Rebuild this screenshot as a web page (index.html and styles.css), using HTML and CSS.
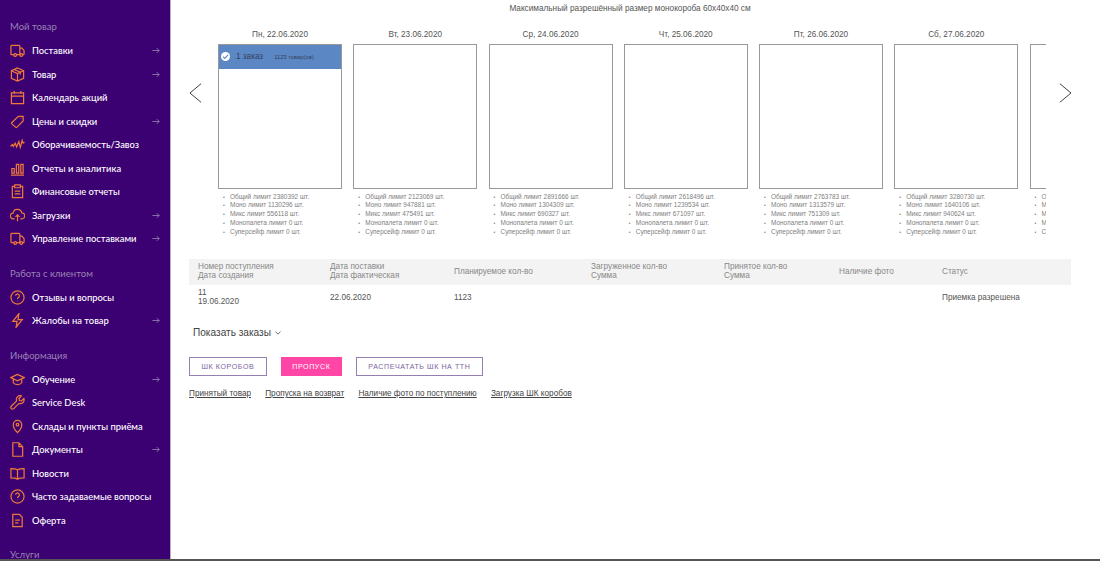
FILE: index.html
```html
<!DOCTYPE html>
<html lang="ru">
<head>
  <meta charset="UTF-8" />
  <title>Поставки</title>
  <link rel="stylesheet" href="styles.css">
</head>
<body>
  <svg class="sprite" width="0" height="0">
    <defs>
      <symbol id="i-truck" viewBox="0 0 16 16"><path d="M4 12.500H2a1 1 0 0 1-1-1v-8a1 1 0 0 1 1-1h7.500a1 1 0 0 1 1 1v9H7M10.500 5.500h2.300l2.200 2.700v3.300a1 1 0 0 1-1 1h-1M10.500 12.500h.5"/><circle cx="5.500" cy="12.800" r="1.500"/><circle cx="12" cy="12.800" r="1.500"/></symbol>
      <symbol id="i-box" viewBox="0 0 16 16"><path d="M8 1l6.500 3v8L8 15l-6.500-3V4zM1.500 4L8 7l6.500-3M8 7v8M4.500 2.600l6.500 3v2.500"/></symbol>
      <symbol id="i-cal" viewBox="0 0 16 16"><path d="M1.500 3h13v11.500h-13zM1.500 6.500h13M4.500 1v3M11.500 1v3"/></symbol>
      <symbol id="i-tag" viewBox="0 0 16 16"><path d="M9 2.500h5v5l-6.800 6.800a.7.7 0 0 1-1 0L1.700 10.300a.7.7 0 0 1 0-1zM11.500 4.300l.3.300"/></symbol>
      <symbol id="i-pulse" viewBox="0 0 16 16"><path d="M.5 10l2-2 1 2 2-3.500 1.500 4L9.500 5l1.500 6 2-7.500 1 3 1.500-1"/></symbol>
      <symbol id="i-bars" viewBox="0 0 16 16"><path d="M2 8h2.500v5H2zM6.800 3.500h2.500V13H6.800zM11.500 3.500h2.500V13h-2.500zM1 15h14"/></symbol>
      <symbol id="i-clip" viewBox="0 0 16 16"><path d="M5 2.500H2.500v12h11v-12H11M5 1h6v3H5zM5 7.500h6M5 10.500h6"/></symbol>
      <symbol id="i-cloud" viewBox="0 0 16 16"><path d="M5 11.500H3.500a3 3 0 0 1-.3-6 4.800 4.800 0 0 1 9.400-.2 3 3 0 0 1 0 6.200H11M8 14V7.500M5.800 9.500L8 7.300l2.200 2.200"/></symbol>
      <symbol id="i-help" viewBox="0 0 16 16"><circle cx="8" cy="8" r="7"/><path d="M6 6.200a2 2 0 1 1 3 1.800c-.7.400-1 .8-1 1.500M8 11.500v.5"/></symbol>
      <symbol id="i-bolt" viewBox="0 0 16 16"><path d="M9.500.8L3 9h4.500l-1 6.200L13 7H8.500z"/></symbol>
      <symbol id="i-grad" viewBox="0 0 16 16"><path d="M8 2.500L.8 6 8 9.500 15.200 6zM3.500 7.500v4c1 1.500 2.800 2 4.500 2s3.500-.5 4.500-2v-4"/></symbol>
      <symbol id="i-wrench" viewBox="0 0 16 16"><path d="M14.800 3.800l-2.600 2.500-2.200-.4-.4-2.200L12.100 1a4 4 0 0 0-5 5.300L1.400 12a1.800 1.800 0 0 0 2.600 2.600l5.700-5.700a4 4 0 0 0 5.100-5.100z"/></symbol>
      <symbol id="i-pin" viewBox="0 0 16 16"><path d="M8 14.500S3.500 10 3.500 6a4.500 4.500 0 0 1 9 0C12.500 10 8 14.500 8 14.500z"/><circle cx="8" cy="6" r="1.400"/></symbol>
      <symbol id="i-doc" viewBox="0 0 16 16"><path d="M3 .8h6.500L13.500 5v10.200H3zM9.500 .8V5h4"/></symbol>
      <symbol id="i-book" viewBox="0 0 16 16"><path d="M8 4C6.500 3 4 2.700 1 2.700v10c3 0 5.500.3 7 1.300 1.500-1 4-1.300 7-1.300v-10C12 2.700 9.500 3 8 4zM8 4v10"/></symbol>
      <symbol id="i-offer" viewBox="0 0 16 16"><path d="M3 1.500h7L13 4.500v10H3zM5.500 7.500h5M5.500 10.500h3.500"/></symbol>
      <symbol id="i-arrow" viewBox="0 0 10 8"><path d="M.5 4h8.500M6 1l3 3-3 3"/></symbol>
    </defs>
  </svg>

  <div class="layout">
    <!-- Боковое меню -->
    <nav class="sidebar">
      <div class="nav-title">Мой товар</div>
      <a class="nav-item"><svg class="nav-icon"><use href="#i-truck"/></svg><span>Поставки</span><svg class="nav-arrow"><use href="#i-arrow"/></svg></a>
      <a class="nav-item"><svg class="nav-icon"><use href="#i-box"/></svg><span>Товар</span><svg class="nav-arrow"><use href="#i-arrow"/></svg></a>
      <a class="nav-item"><svg class="nav-icon"><use href="#i-cal"/></svg><span>Календарь акций</span></a>
      <a class="nav-item"><svg class="nav-icon"><use href="#i-tag"/></svg><span>Цены и скидки</span><svg class="nav-arrow"><use href="#i-arrow"/></svg></a>
      <a class="nav-item"><svg class="nav-icon"><use href="#i-pulse"/></svg><span>Оборачиваемость/Завоз</span></a>
      <a class="nav-item"><svg class="nav-icon"><use href="#i-bars"/></svg><span>Отчеты и аналитика</span></a>
      <a class="nav-item"><svg class="nav-icon"><use href="#i-clip"/></svg><span>Финансовые отчеты</span></a>
      <a class="nav-item"><svg class="nav-icon"><use href="#i-cloud"/></svg><span>Загрузки</span><svg class="nav-arrow"><use href="#i-arrow"/></svg></a>
      <a class="nav-item"><svg class="nav-icon"><use href="#i-truck"/></svg><span>Управление поставками</span><svg class="nav-arrow"><use href="#i-arrow"/></svg></a>

      <div class="nav-title">Работа с клиентом</div>
      <a class="nav-item"><svg class="nav-icon"><use href="#i-help"/></svg><span>Отзывы и вопросы</span></a>
      <a class="nav-item"><svg class="nav-icon"><use href="#i-bolt"/></svg><span>Жалобы на товар</span><svg class="nav-arrow"><use href="#i-arrow"/></svg></a>

      <div class="nav-title">Информация</div>
      <a class="nav-item"><svg class="nav-icon"><use href="#i-grad"/></svg><span>Обучение</span><svg class="nav-arrow"><use href="#i-arrow"/></svg></a>
      <a class="nav-item"><svg class="nav-icon"><use href="#i-wrench"/></svg><span>Service Desk</span></a>
      <a class="nav-item"><svg class="nav-icon"><use href="#i-pin"/></svg><span>Склады и пункты приёма</span></a>
      <a class="nav-item"><svg class="nav-icon"><use href="#i-doc"/></svg><span>Документы</span><svg class="nav-arrow"><use href="#i-arrow"/></svg></a>
      <a class="nav-item"><svg class="nav-icon"><use href="#i-book"/></svg><span>Новости</span></a>
      <a class="nav-item"><svg class="nav-icon"><use href="#i-help"/></svg><span>Часто задаваемые вопросы</span></a>
      <a class="nav-item"><svg class="nav-icon"><use href="#i-offer"/></svg><span>Оферта</span></a>

      <div class="nav-title">Услуги</div>
    </nav>

    <main class="content">
      <div class="max-size">Максимальный разрешённый размер монокороба 60х40х40 см</div>

      <div class="carousel">
        <svg class="chevron" viewBox="0 0 14 22"><path d="M13 1L1 11l12 10"/></svg>
        <div class="days" id="days"></div>
        <svg class="chevron" viewBox="0 0 14 22"><path d="M2 1l12 10L2 21"/></svg>
      </div>

      <div class="table-head">
        <div class="col col-1">Номер поступления<br>Дата создания</div>
        <div class="col col-2">Дата поставки<br>Дата фактическая</div>
        <div class="col col-3">Планируемое кол-во</div>
        <div class="col col-4">Загруженное кол-во<br>Сумма</div>
        <div class="col col-5">Принятое кол-во<br>Сумма</div>
        <div class="col col-6">Наличие фото</div>
        <div class="col col-7">Статус</div>
      </div>
      <div class="table-row">
        <div class="col col-1">11<br>19.06.2020</div>
        <div class="col col-2">22.06.2020</div>
        <div class="col col-3">1123</div>
        <div class="col col-4"></div>
        <div class="col col-5"></div>
        <div class="col col-6"></div>
        <div class="col col-7">Приемка разрешена</div>
      </div>

      <div class="show-orders">Показать заказы <svg class="caret" viewBox="0 0 8 5"><path d="M.5.500L4 4 7.500.500"/></svg></div>

      <div class="buttons">
        <button class="btn">ШК коробов</button>
        <button class="btn btn-pink">Пропуск</button>
        <button class="btn">Распечатать ШК на ТТН</button>
      </div>

      <div class="links">
        <a>Принятый товар</a>
        <a>Пропуска на возврат</a>
        <a>Наличие фото по поступлению</a>
        <a>Загрузка ШК коробов</a>
      </div>
    </main>
  </div>

  <script>
    const data = [
      { date: "Пн, 22.06.2020", total: 2380392, mono: 1130296, mix: 556118, order: true },
      { date: "Вт, 23.06.2020", total: 2123069, mono: 947881, mix: 475491 },
      { date: "Ср, 24.06.2020", total: 2891666, mono: 1304309, mix: 690327 },
      { date: "Чт, 25.06.2020", total: 2618496, mono: 1239534, mix: 671097 },
      { date: "Пт, 26.06.2020", total: 2763783, mono: 1313579, mix: 751309 },
      { date: "Сб, 27.06.2020", total: 3280730, mono: 1640106, mix: 940624 },
      { date: "Вс, 28.06.2020", total: 3280730, mono: 1640106, mix: 940624 }
    ];

    const days = document.getElementById("days");

    data.forEach((item) => {
      const day = document.createElement("div");
      day.className = "day";
      const order = item.order
        ? `<div class="order"><span class="check"><svg viewBox="0 0 8 8"><path d="M1.800 4.200l1.500 1.500 3-3.200"/></svg></span><span class="order-count">1 заказ</span><span class="order-goods">1123 товар(ов)</span></div>`
        : "";
      day.innerHTML = `
        <div class="day-date">${item.date}</div>
        <div class="day-box">${order}</div>
        <ul class="limits">
          <li>Общий лимит ${item.total} шт.</li>
          <li>Моно лимит ${item.mono} шт.</li>
          <li>Микс лимит ${item.mix} шт.</li>
          <li>Монопалета лимит 0 шт.</li>
          <li>Суперсейф лимит 0 шт.</li>
        </ul>
      `;
      days.appendChild(day);
    });
  </script>
</body>
</html>
```

FILE: styles.css
```css
html, body {
  margin: 0;
  height: 561px;
  overflow: hidden;
}

body {
  font-family: "Liberation Sans", Arial, sans-serif;
  background-color: #fff;
  color: #555;
}

.sprite {
  display: block;
  height: 0;
}

.layout {
  display: flex;
  height: 559px;
  border-bottom: 2px solid #555;
}

/* Боковое меню */
.sidebar {
  width: 170px;
  flex: none;
  height: 559px;
  overflow: hidden;
  background-color: #3b0072;
  border-right: 1px solid #b5b0bb;
  font-family: Lato, "Open Sans", sans-serif;
}

.nav-title {
  height: 14px;
  line-height: 14px;
  margin: 20px 0 5px 10px;
  font-size: 9.500px;
  color: #9a84b3;
}

.nav-item + .nav-title {
  margin-top: 16px;
}

.nav-item {
  display: flex;
  align-items: center;
  height: 23.500px;
  padding: 0 10px;
  color: #fff;
  font-size: 9.400px;
  font-weight: 500;
}

.nav-item span {
  flex: 1;
  white-space: nowrap;
}

.nav-icon {
  width: 15px;
  height: 15px;
  flex: none;
  margin-right: 7px;
  fill: none;
  stroke: #f0793a;
  stroke-width: 1.300;
}

.nav-arrow {
  width: 8px;
  height: 7px;
  flex: none;
  fill: none;
  stroke: #9c86b4;
  stroke-width: 1;
}

.content {
  flex: 1;
  min-width: 0;
  padding: 0 29px 0 18px;
}

.max-size {
  font-size: 8.230px;
  line-height: 10px;
  margin-top: 4px;
  text-align: center;
  color: #555;
}

.carousel {
  display: flex;
  align-items: flex-start;
  margin-top: 16px;
  height: 229px;
}

.chevron {
  width: 13px;
  height: 22px;
  flex: none;
  margin-top: 52px;
  fill: none;
  stroke: #333;
  stroke-width: 1;
}

.days {
  flex: 1;
  min-width: 0;
  display: flex;
  gap: 11.250px;
  overflow: hidden;
  margin: 0 12px 0 16px;
}

.day {
  flex: 0 0 124px;
}

.day-date {
  height: 14px;
  line-height: 10px;
  text-align: center;
  font-size: 8.200px;
  color: #555;
}

.day-box {
  height: 143px;
  border: 1px solid #999;
  background-color: #fff;
}

.order {
  display: flex;
  align-items: center;
  height: 23.500px;
  background-color: #5b87c5;
  color: #33425c;
  padding-left: 2px;
}

.check {
  display: flex;
  width: 9px;
  height: 9px;
  border-radius: 50%;
  background-color: #fff;
  margin-right: 6px;
}

.check svg {
  width: 9px;
  height: 9px;
  fill: none;
  stroke: #5b87c5;
  stroke-width: 1;
}

.order-count {
  font-size: 8.200px;
  margin-right: 11px;
}

.order-goods {
  font-size: 5.800px;
}

.limits {
  margin: 3.500px 0 0 0;
  padding: 0 0 0 5px;
  font-size: 6.450px;
  line-height: 8.850px;
  color: #808080;
  list-style: none;
}

.limits li {
  white-space: nowrap;
}

.limits li::before {
  content: "•";
  display: inline-block;
  width: 7px;
  font-size: 5px;
}

/* Таблица поставок */
.table-head,
.table-row {
  display: flex;
  align-items: center;
  font-size: 8.200px;
  line-height: 8.800px;
}

.table-head {
  height: 26px;
  background-color: #f3f3f3;
  color: #888;
}

.table-row {
  height: 26px;
  color: #555;
}

.col-1 { width: 141px; padding-left: 9px; box-sizing: border-box; flex: none; }
.col-2 { width: 124px; flex: none; }
.col-3 { width: 137px; flex: none; }
.col-4 { width: 133px; flex: none; }
.col-5 { width: 115px; flex: none; }
.col-6 { width: 103px; flex: none; }
.col-7 { flex: 1; }

.show-orders {
  margin: 15px 0 0 4px;
  font-size: 10.100px;
  line-height: 13px;
  color: #444;
}

.caret {
  width: 6px;
  height: 4px;
  margin-left: 1px;
  vertical-align: 1px;
  fill: none;
  stroke: #444;
  stroke-width: 1;
}

.buttons {
  display: flex;
  gap: 14px;
  margin-top: 18px;
}

.btn {
  height: 19px;
  padding: 0 11.500px;
  border: 1px solid #9480b0;
  background-color: #fff;
  color: #7c64a0;
  font-family: "Liberation Sans", Arial, sans-serif;
  font-size: 7.100px;
  letter-spacing: 0.570px;
  text-transform: uppercase;
}

.btn-pink {
  padding: 0 10.500px;
  background-color: #ff45a5;
  border-color: #ff45a5;
  color: #fff;
}

.links {
  display: flex;
  gap: 14.200px;
  margin-top: 13px;
  font-size: 8.200px;
  line-height: 10px;
  color: #444;
}

.links a {
  text-decoration: underline;
}
```
